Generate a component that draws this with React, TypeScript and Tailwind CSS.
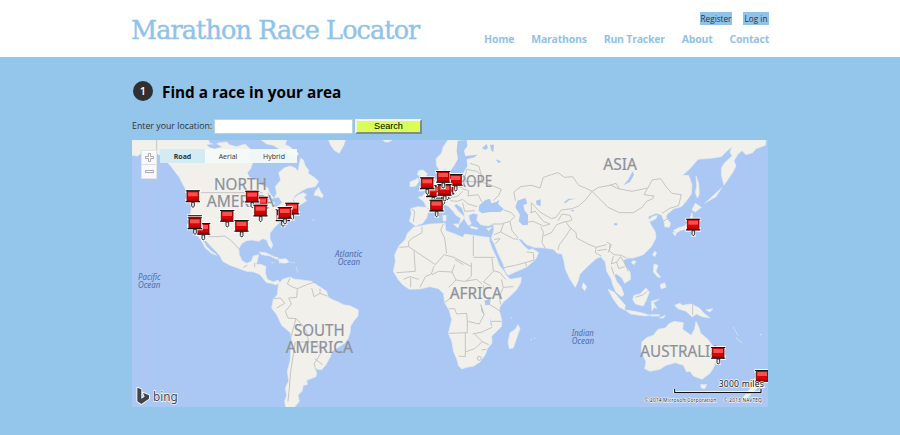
import React from "react";

const land = [
  // North and Central America
  "M6 6 L235 6 240 16 255 20 268 14 290 12 298 20 320 26 345 18 362 34 352 58 368 76 362 92 352 104 358 118 380 126 396 142 412 148 420 166 432 182 440 166 436 146 452 126 446 104 462 90 480 84 496 90 504 100 508 78 512 60 520 66 526 84 536 96 534 106 550 116 566 130 556 146 532 150 516 158 496 172 488 186 502 172 520 164 530 170 522 178 530 188 518 196 506 204 498 196 488 202 478 212 464 226 452 242 446 256 432 270 420 286 420 302 428 320 424 332 416 322 410 306 398 302 386 310 366 306 350 308 336 316 326 332 328 350 336 368 350 376 364 370 370 354 386 350 382 370 378 378 396 380 408 386 406 404 412 424 430 432 444 426 450 436 436 440 424 436 410 434 398 420 390 410 372 402 350 400 328 392 300 382 278 370 270 354 258 340 240 322 224 304 218 304 228 324 244 340 254 346 260 352 244 346 226 330 212 304 196 286 184 262 180 238 184 208 180 190 188 178 170 160 158 138 148 118 134 100 122 84 104 66 88 50 72 44 52 42 34 46 22 54 6 52Z",
  "M394 6 L470 6 466 20 480 26 492 38 506 46 500 56 484 50 470 40 450 34 430 22 410 18Z",
  "M596 6 H646 L642 20 634 34 628 46 614 38 602 22Z M758 6 H786 L776 12 766 12Z",
  "M556 160 L566 148 572 162 580 172 576 180 566 174 552 172Z",
  // South America
  "M445 440 L458 424 480 417 492 423 510 425 545 430 560 440 575 450 590 460 595 478 610 486 625 492 640 500 660 503 685 516 684 534 672 548 662 564 660 584 655 600 645 615 625 628 606 640 602 654 588 680 575 695 562 694 552 686 560 704 558 716 530 727 532 740 520 742 516 760 504 772 508 790 490 812 468 812 464 790 470 772 466 750 476 730 472 700 480 670 482 640 486 610 482 585 455 562 440 530 425 510 430 484 442 470Z",
  // Africa
  "M850 268 L870 264 900 258 945 256 948 278 975 288 998 298 1004 288 1030 292 1060 296 1078 298 1078 308 1086 330 1100 360 1108 382 1122 400 1130 414 1142 424 1174 418 1172 434 1160 455 1140 475 1120 492 1110 506 1108 518 1115 545 1115 565 1100 580 1085 595 1086 615 1072 632 1066 650 1050 672 1030 685 1010 688 995 693 986 684 980 662 970 640 966 612 955 586 965 545 958 518 944 494 940 466 925 452 900 446 870 453 838 454 818 440 804 424 790 400 796 370 794 350 808 322 826 304 832 286Z",
  "M1164 560 L1170 572 1160 600 1150 630 1138 632 1134 614 1140 584 1156 574Z",
  // Eurasia
  "M954 6 L940 26 934 46 918 62 920 84 930 98 948 92 948 116 930 120 914 130 900 148 886 162 878 174 864 178 880 190 890 208 862 206 842 212 844 228 838 250 856 264 878 256 890 240 894 224 914 206 940 198 954 204 968 218 978 232 992 240 988 258 996 250 1004 238 984 218 972 202 980 198 996 210 1002 226 1004 244 1014 262 1024 258 1018 244 1016 232 1030 226 1044 230 1040 246 1052 260 1074 264 1090 258 1092 276 1084 300 1094 320 1104 346 1118 374 1126 400 1134 412 1156 402 1192 386 1218 362 1226 344 1208 332 1196 336 1180 322 1164 302 1174 304 1190 320 1212 328 1242 330 1270 334 1282 346 1296 348 1302 370 1306 394 1320 424 1336 448 1344 430 1350 408 1374 384 1398 362 1412 356 1426 372 1430 400 1444 424 1448 440 1458 462 1474 476 1482 470 1474 448 1460 430 1452 410 1460 408 1476 420 1484 436 1502 424 1500 402 1484 382 1480 366 1496 360 1510 360 1540 350 1564 326 1578 300 1576 282 1558 252 1578 242 1582 232 1566 236 1558 246 1554 236 1578 226 1594 230 1602 248 1604 266 1618 268 1622 256 1608 238 1612 228 1632 212 1654 206 1670 188 1684 168 1686 140 1676 112 1658 112 1680 92 1704 64 1750 60 1774 56 1790 40 1806 26 1800 42 1806 54 1784 74 1774 90 1774 112 1782 142 1794 124 1808 104 1818 84 1812 68 1824 48 1836 38 1848 50 1868 44 1878 32 1906 22 1908 6Z",
  "M866 98 L880 96 892 108 886 116 906 142 896 156 866 160 878 146 870 128 876 116 862 110Z M854 126 L864 120 866 130 858 144 840 146 840 132Z",
  "M1020 264 L1044 270 1040 274 1022 270Z M1070 272 L1086 268 1076 278Z M970 258 L988 258 984 270Z M938 232 H948 V248 L940 250Z",
  "M1360 434 L1370 446 1364 458 1356 448Z M1508 368 L1518 370 1512 380 1504 374Z M1574 340 L1580 344 1574 356 1568 350Z",
  // Japan and northern islands
  "M1698 114 L1706 136 1708 168 1702 180 1696 164 1700 144Z M1696 196 L1714 208 1696 222 1686 216Z M1686 224 L1690 250 1674 272 1650 278 1640 284 1630 278 1644 270 1664 264 1678 246Z M1628 284 L1640 280 1636 294Z",
  // Southeast Asia and Oceania
  "M1434 454 L1452 462 1472 486 1486 502 1484 516 1468 508 1450 484Z M1486 516 L1514 520 1540 526 1560 532 1544 534 1502 528Z M1512 472 L1530 468 1548 450 1558 462 1550 484 1540 504 1516 498 1508 484Z M1564 490 L1588 484 1570 494 1580 512 1572 508 1566 518Z M1572 378 L1584 382 1578 400 1592 418 1584 418 1570 402Z M1590 440 L1604 434 1608 448 1594 452Z M1562 530 H1588 V534 H1562Z M1588 540 L1606 532 1600 540Z",
  "M1634 502 L1650 496 1656 502 1684 498 1708 510 1722 526 1740 540 1716 536 1700 528 1686 536 1668 520 1644 512Z M1728 516 L1748 512 1740 522Z",
  "M1535 612 L1552 598 1570 592 1584 574 1606 570 1616 558 1632 550 1660 554 1658 574 1684 592 1694 572 1698 550 1706 566 1712 586 1732 602 1744 618 1760 642 1762 664 1750 690 1740 706 1716 724 1690 714 1680 700 1670 702 1660 682 1636 674 1608 682 1590 694 1560 700 1544 692 1548 672 1534 640Z",
  "M1712 740 L1730 740 1724 752 1714 750Z M1876 732 L1900 724 1880 752 1846 786 1836 790 1840 778Z M1882 698 L1906 716 1894 740 1878 724Z",
];

const water = [
  "M983 8 L1010 6 1012 24 1002 38 1006 54 1042 50 1034 58 1010 64 1012 84 998 108 972 112 948 110 944 96 960 100 972 84 984 62 980 38Z",
  "M1046 218 L1048 202 1066 186 1080 182 1084 196 1098 192 1108 186 1104 198 1122 214 1110 222 1080 222 1056 226Z",
  "M1162 188 L1186 180 1192 196 1180 202 1184 218 1194 230 1194 260 1178 262 1166 250 1170 230 1156 208Z",
  "M1218 188 L1232 184 1232 204 1220 200Z M1302 192 L1316 182 1338 182 1318 186 1306 196Z M1324 216 H1332 V220 H1324Z",
  "M1508 100 L1512 110 1500 132 1480 142 1494 126Z M1056 30 L1070 18 1074 30 1066 36Z M1080 20 H1092 L1090 42 1084 38Z M1096 64 L1114 70 1106 76Z M1064 488 L1082 480 1080 500 1066 502Z M1052 496 L1064 532 1054 520Z M1080 540 L1088 566 1082 560Z",
  "M420 184 L446 178 456 194 440 206 428 204 436 196Z M452 218 L478 204 464 218Z M230 20 L260 18 276 26 254 32 238 28Z M300 10 L320 16 310 20Z M1452 256 H1462 V262 H1452Z",
];

const borders = [
  "M80 6 V50 L102 66 M206 164 H398 M236 296 L264 296 284 294 304 308 326 332 M340 388 L352 382 M374 374 V388 M420 186 L414 164 M488 186 L496 194 M128 100 L134 108",
  "M480 420 L472 438 486 446 502 452 500 478 M502 452 L530 440 555 432 M545 450 L552 476 570 466 592 474 M570 452 V466 M500 478 L476 480 484 498 466 520 474 540 498 542 M432 482 L452 480 464 496 440 510 M498 542 L516 560 530 580 M498 542 L490 570 484 596 M530 580 L536 612 560 614 576 640 M500 612 L536 612 M496 612 L490 650 482 700 478 750 474 790 M576 640 L552 678 556 688 M554 662 L578 680",
  "M836 310 L848 300 876 284 876 266 M836 310 V326 L808 328 M836 326 L916 380 942 350 M852 340 L856 400 800 404 M940 258 L932 276 944 300 950 346 M942 350 L972 358 1024 386 V374 M1030 294 V354 M1030 358 H1094 M1024 386 V414 L1008 430 M1000 380 L974 364 M912 384 L904 408 886 416 870 448 M820 424 L840 416 866 424 M842 420 V448 M906 410 L926 400 966 402 M966 402 L978 426 956 448 M966 402 L974 380 M978 426 L1002 430 1040 424 1056 438 M1086 360 L1090 400 1060 432 1082 444 M1092 398 L1110 404 1126 424 M1114 424 L1120 448 1150 446 M1060 442 L1066 480 M1120 448 L1108 476 1112 500 M1064 490 L1112 520 M944 494 L964 478 980 456 M956 512 L974 512 980 528 1010 526 1012 550 M1012 550 V584 L956 586 M1012 550 L1048 558 1062 530 1052 500 M1006 584 V620 M1006 620 V656 L986 654 M1006 642 L1034 632 1058 610 M1034 588 L1058 612 1076 620 M1028 588 L1056 582 1086 568 M1084 550 H1114 M1054 636 L1068 634",
  "M846 214 L854 220 850 252 M892 212 L916 214 M930 120 L940 140 936 166 956 172 M950 118 L966 144 996 148 M968 112 L986 116 1006 114 1010 94 M1010 94 L1040 100 1054 110 1046 84 1020 76 M996 148 L1008 128 1006 116 M1006 130 L1054 132 1054 110 M1054 132 L1080 140 1114 154 1106 172 1090 188 M996 152 L1016 158 1014 174 1044 170 1056 192 M936 166 L958 180 984 174 998 160 M960 188 L982 190 998 184 1014 198 1042 206 M998 194 L1004 220 1034 218 M1088 258 L1114 258 1140 250 1154 236 1144 224 1122 216 M1120 258 L1112 282 1092 290 M1112 282 L1150 302 1164 304 M1140 250 L1146 278 1164 300 M1092 304 L1110 302 1096 318 M1120 390 L1134 386 1156 382 1186 374 M1186 374 L1212 366 1210 344 1190 342 M1186 374 L1190 386",
  "M1156 188 L1152 162 1172 146 1204 142 1230 150 1240 118 1264 110 1284 104 1304 118 1328 116 1346 142 1366 150 1386 160 M1386 160 L1368 184 1346 204 1326 212 1294 216 1278 238 1264 242 1230 222 1204 194 V224 M1200 224 L1216 220 1240 250 1260 258 1240 264 1210 250 1194 252 M1232 266 L1240 282 1236 314 1248 334 M1240 294 L1264 284 1280 260 1308 250 M1284 248 L1296 228 1320 232 1326 246 1308 252 1322 272 1308 294 1288 320 1284 336 M1322 270 L1338 284 1340 300 1374 318 1398 328 1430 320 M1386 160 L1406 148 1440 142 M1386 160 L1408 182 1434 208 M1398 328 L1396 344 1414 354 M1402 338 L1430 334 M1430 312 L1444 320 1434 344 M1440 140 L1464 152 1506 160 1554 150 1566 126 1592 122 1608 146 1626 166 1654 170 1646 202 1624 210 M1440 142 L1458 136 1468 152 M1434 208 L1468 224 1510 224 1536 208 1550 190 1568 182 1572 174 1542 170 1552 152 M1440 318 L1438 338 1452 350 1474 352 1490 360 M1450 354 L1444 378 1460 372 1466 392 1484 386 M1460 372 L1472 356 1488 382 1494 400 M1444 386 L1452 410 M1596 226 L1624 208 M1602 248 L1614 242 M1688 500 V530 M1516 478 L1540 470 1552 460",
];

// Each pin is given by the top-left corner of its head
const pins = [
  [198, 255], [173, 232], [173, 238], [167, 157], [270, 216], [313, 246], [372, 176], [345, 158], [370, 200],
  [465, 194], [437, 214], [443, 207],
  [918, 148], [930, 134], [955, 108], [888, 142], [870, 118], [898, 185], [922, 138], [918, 99],
  [1668, 242], [1743, 627], [1875, 696],
];

function Pin({ x, y }: { x: number; y: number }) {
  return (
    <g transform={`translate(${x} ${y})`}>
      <path d="M-2 -3 H45 V8 H42 V25 H45 V39 H29 V54 H16 V39 H-2 V25 H2 V8 H-2Z" fill="#fff" fillOpacity=".85" />
      <path d="M18 36 H26 V47 L23 51 H21 L18 47Z" fill="#e8e8e8" stroke="#111" strokeWidth="2.5" />
      <path d="M4 2 H39 V33 H4Z" fill="#dc0000" stroke="#5a0000" strokeWidth="2.4" />
      <path d="M7 6 H36 V18 H7Z" fill="#f65050" />
      <path d="M5 27 H38 V32 H5Z" fill="#b40000" />
      <path d="M0 0 H43 V3 H0Z M0 32 H43 V35.5 H0Z" fill="#151515" />
    </g>
  );
}

function MapLabel({ x, y, w, children }: { x: number; y: number; w: number; children: string }) {
  return (
    <text x={x} y={y} textLength={w} lengthAdjust="spacingAndGlyphs" fontSize="46" fill="#8d919b" stroke="#8d919b" strokeWidth=".6">
      {children}
    </text>
  );
}

function WorldMap() {
  return (
    <svg viewBox="6 6 1908 801" className="block h-[267px] w-[636px] bg-[#abc7f3] font-['Noto_Sans',sans-serif]">
      {land.map((d) => <path key={d} d={d} fill="#f1f0eb" stroke="#e4ebf0" strokeWidth="2" strokeLinejoin="round" />)}
      {water.map((d) => <path key={d} d={d} fill="#abc7f3" />)}
      {borders.map((d) => <path key={d} d={d} fill="none" stroke="#c2c2c0" strokeWidth="2.8" strokeLinejoin="round" />)}
      <circle cx="1048" cy="661" r="6" fill="none" stroke="#bbb" strokeWidth="2.5" />
      <path d="M388 342 L408 344 432 356 446 360 440 364 420 354 394 350Z M446 364 L468 362 478 372 464 376 448 374Z M482 374 H494 M424 374 H434 M498 388 L504 404 M548 246 h6 M1440 340 M1724 196 L1758 176 1776 148 M1142 540 h8 M1810 568 L1824 592 M1818 600 L1838 616 M1890 590 h8 M500 780 M1202 604 h4 M1212 600 h4" fill="#f1f0eb" stroke="#e5edf4" strokeWidth="2.5" strokeDasharray="5 3" />
      <MapLabel x={252} y={156} w={158}>NORTH</MapLabel>
      <MapLabel x={230} y={206} w={203}>AMERICA</MapLabel>
      <MapLabel x={492} y={595} w={152}>SOUTH</MapLabel>
      <MapLabel x={467} y={645} w={202}>AMERICA</MapLabel>
      <MapLabel x={930} y={146} w={157}>EUROPE</MapLabel>
      <MapLabel x={1420} y={97} w={101}>ASIA</MapLabel>
      <MapLabel x={959} y={482} w={157}>AFRICA</MapLabel>
      <MapLabel x={1531} y={658} w={239}>AUSTRALIA</MapLabel>
      <g fontSize="25.5" fontStyle="italic" fill="#4f6db4">
        <text x="615" y="357" textLength="82" lengthAdjust="spacingAndGlyphs">Atlantic</text>
        <text x="623" y="381" textLength="67" lengthAdjust="spacingAndGlyphs">Ocean</text>
        <text x="24" y="425" textLength="68" lengthAdjust="spacingAndGlyphs">Pacific</text>
        <text x="24" y="449" textLength="67" lengthAdjust="spacingAndGlyphs">Ocean</text>
        <text x="1325" y="593" textLength="66" lengthAdjust="spacingAndGlyphs">Indian</text>
        <text x="1325" y="617" textLength="67" lengthAdjust="spacingAndGlyphs">Ocean</text>
      </g>
      {pins.map(([x, y]) => <Pin key={`${x}-${y}`} x={x} y={y} />)}
      <g strokeLinejoin="round">
        <path d="M22 749 L34 754 V782 L44 776 39 764 57 772 V782 L34 798 22 790Z" fill="#404348" stroke="#fff" strokeWidth="5" paintOrder="stroke" />
        <text x="69" y="788" fontSize="38" textLength="74" lengthAdjust="spacingAndGlyphs" fill="#404348" stroke="#fff" strokeWidth="4" paintOrder="stroke">bing</text>
        <text x="1766" y="746" fontSize="26" textLength="136" fill="#111" stroke="#fff" strokeWidth="4" paintOrder="stroke">3000 miles</text>
        <path d="M1634 753 V764 H1893 V753" fill="none" stroke="#fff" strokeWidth="8" />
        <path d="M1634 753 V764 H1893 V753" fill="none" stroke="#111" strokeWidth="3.4" />
        <g fontSize="15" fill="#222" stroke="#fff" strokeWidth="3" paintOrder="stroke">
          <text x="1543" y="793" textLength="216">© 2014 Microsoft Corporation</text>
          <text x="1781" y="793" textLength="115">© 2013 NAVTEQ</text>
        </g>
      </g>
    </svg>
  );
}

function MapControls() {
  return (
    <>
      <div className="absolute left-[9px] top-[10px] flex h-[29px] w-[16px] flex-col divide-y divide-[#ddd] border border-[#e1e5e6] bg-white/90">
        <button className="flex flex-1 items-center justify-center">
          <svg viewBox="0 0 9 9" className="size-[9px]"><path d="M3.5 .5 H5.5 V3.5 H8.5 V5.5 H5.5 V8.5 H3.5 V5.5 H.5 V3.5 H3.5Z" fill="#fff" stroke="#aaa" /></svg>
        </button>
        <button className="flex flex-1 items-center justify-center">
          <svg viewBox="0 0 9 3" className="h-[3px] w-[9px]"><path d="M.5 .5 H8.5 V2.5 H.5Z" fill="#fff" stroke="#aaa" /></svg>
        </button>
      </div>
      <div className="absolute left-[28px] top-[9px] flex h-[14px] w-[137px] bg-[#f3faf9]/95 text-center text-[7px] leading-[15px] text-[#333]">
        <button className="w-[45px] bg-[#d3ecf3] font-bold">Road</button>
        <button className="w-[46px]">Aerial</button>
        <button className="w-[46px]">Hybrid</button>
      </div>
    </>
  );
}

export default function App() {
  return (
    <div className="h-[435px] w-[900px] overflow-hidden bg-[#94c5eb] font-['Open_Sans',sans-serif] text-[#333]">
      <header className="h-[57px] bg-white">
        <div className="ml-[131px] flex w-[638px] justify-between text-[#90c3ea]">
          <h1 className="mt-[14px] w-[300px] whitespace-nowrap font-['DejaVu_Serif',serif] text-[25.5px] leading-8 tracking-[-0.9px] [-webkit-text-stroke:0.4px_#90c3ea]">Marathon Race Locator</h1>
          <div className="flex flex-col items-end">
            <div className="mt-3 flex gap-[11px] text-[8.2px] leading-[13px] text-[#333]">
              <a className="h-[13px] w-8 whitespace-nowrap bg-[#90c3ea] text-center">Register</a>
              <a className="h-[13px] w-[26px] whitespace-nowrap bg-[#90c3ea] text-center">Log in</a>
            </div>
            <nav className="mt-[6px] flex gap-[17px] whitespace-nowrap text-[10.5px] font-bold leading-4 tracking-[-0.22px]">
              <a>Home</a><a>Marathons</a><a>Run Tracker</a><a>About</a><a>Contact</a>
            </nav>
          </div>
        </div>
      </header>
      <main className="ml-[132px] w-[636px]">
        <div className="flex h-[61px] pt-6">
          <span className="ml-px flex size-5 items-center justify-center rounded-full bg-[#303030] text-[11px] font-semibold text-white">1</span>
          <h2 className="ml-[9px] whitespace-nowrap text-[15.3px] font-bold leading-[22px] text-black">Find a race in your area</h2>
        </div>
        <form className="flex h-[22px] items-start">
          <label className="w-[82px] whitespace-nowrap text-[8.8px] leading-[17px]">Enter your location:</label>
          <input className="mt-px h-[15px] w-[139px] border border-[#bcd2e4] bg-white" />
          <button type="button" className="ml-[2px] mt-px h-[15px] w-[67px] border-2 border-b-[#898989] border-l-[#f4f4f4] border-r-[#898989] border-t-[#f4f4f4] bg-[#d7ff56] font-['Liberation_Sans',sans-serif] text-[9.1px] leading-[11px] text-black">Search</button>
        </form>
        <div className="relative h-[267px]">
          <WorldMap />
          <MapControls />
        </div>
      </main>
    </div>
  );
}
